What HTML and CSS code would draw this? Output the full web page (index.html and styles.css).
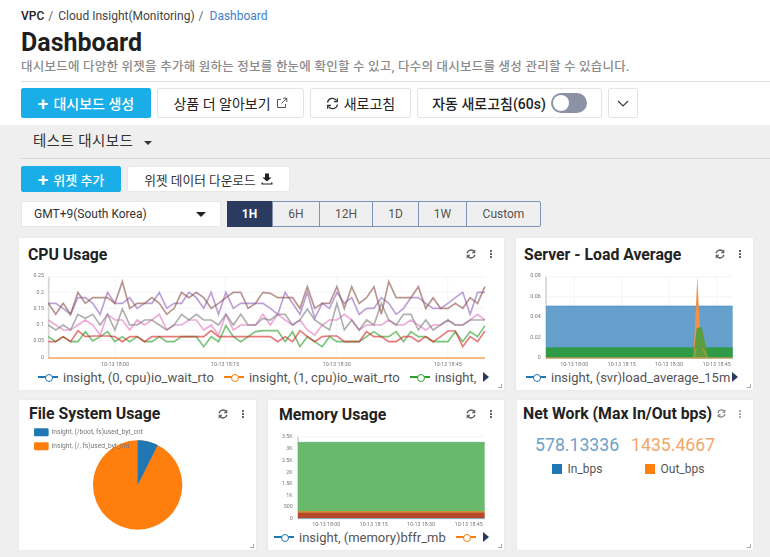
FILE: index.html
```html
<!DOCTYPE html>
<html lang="ko">
<head>
    <meta charset="UTF-8">
    <meta name="viewport" content="width=device-width, initial-scale=1.0">
    <title>Dashboard</title>
    <link rel="stylesheet" href="styles.css">
</head>
<body>

    <div class="top">
        <div class="crumbs">
            <b>VPC</b><span class="sep">/</span><span>Cloud Insight(Monitoring)</span><span class="sep">/</span><span class="crumb-now">Dashboard</span>
        </div>
        <h1>Dashboard</h1>
        <p class="desc">대시보드에 다양한 위젯을 추가해 원하는 정보를 한눈에 확인할 수 있고, 다수의 대시보드를 생성 관리할 수 있습니다.</p>
        <div class="toolbar">
            <button class="btn btn-blue btn-create"><span class="plus">+</span> 대시보드 생성</button>
            <button class="btn btn-more">상품 더 알아보기
                <svg class="ico" width="12" height="12" viewBox="0 0 12 12"><path d="M9.5 7v3.5h-8v-8H5M7 1.2h3.8V5M10.6 1.4 5.5 6.5" fill="none" stroke="#555" stroke-width="1"/></svg>
            </button>
            <button class="btn btn-refresh">
                <svg class="ico" width="13" height="13" viewBox="0 0 13 13"><path d="M1.5 5.5A5 5 0 0 1 10.6 3.6M11.5 7.5A5 5 0 0 1 2.4 9.4" fill="none" stroke="#333" stroke-width="1.3"/><path d="M11.4 1.2v3.4H8M1.6 11.8V8.4H5" fill="none" stroke="#333" stroke-width="1.1"/></svg>
                새로고침
            </button>
            <button class="btn btn-auto">자동 새로고침(60s)<span class="toggle"><span class="knob"></span></span></button>
            <button class="btn btn-down">
                <svg width="12" height="7" viewBox="0 0 12 7"><path d="M1 1l5 5 5-5" fill="none" stroke="#333" stroke-width="1.1"/></svg>
            </button>
        </div>
    </div>

    <div class="main">
        <div class="tabs">
            <span class="tab-name">테스트 대시보드</span><span class="caret"></span>
        </div>
        <div class="actions">
            <button class="btn btn-blue btn-widget"><span class="plus">+</span> 위젯 추가</button>
            <button class="btn btn-white btn-data">위젯 데이터 다운로드
                <svg class="ico" width="12" height="12" viewBox="0 0 12 12"><path d="M4 .5h4v4h2.6L6 8.6 1.4 4.5H4zM.5 9.6h1.4v1h8.2v-1h1.4v2H.5z" fill="#222"/></svg>
            </button>
        </div>
        <div class="filters">
            <div class="zone"><span>GMT+9(South Korea)</span><span class="caret caret-big"></span></div>
            <div class="seg">
                <span class="seg-item seg-on w46">1H</span>
                <span class="seg-item w47">6H</span>
                <span class="seg-item w53">12H</span>
                <span class="seg-item w46">1D</span>
                <span class="seg-item w48">1W</span>
                <span class="seg-item w73">Custom</span>
            </div>
        </div>

        <div class="row row-one">
            <div class="card card-wide">
                <div class="card-head">
                    <h3>CPU Usage</h3>
                    <svg class="mini" width="10" height="10" viewBox="0 0 13 13"><path d="M1.5 5.5A5 5 0 0 1 10.6 3.6M11.5 7.5A5 5 0 0 1 2.4 9.4" fill="none" stroke="#555" stroke-width="1.8"/><path d="M11.4 1v3.8H7.8M1.6 12V8.2h3.6" fill="none" stroke="#555" stroke-width="1.4"/></svg>
                    <span class="dots"><i></i><i></i><i></i></span>
                </div>
                <svg class="chart" width="485" height="96" viewBox="12 105 1455 288">
                    <g class="grid">
                        <path d="M100 125H1410M100 172H1410M100 220H1410M100 268H1410M100 317H1410M300 125V370M630 125V370M965 125V370M1298 125V370"/>
                    </g>
                    <path class="axis" d="M101 125V370"/>
                    <g class="tick-y">
                        <text x="87" y="127">0.25</text>
                        <text x="87" y="177">0.2</text>
                        <text x="87" y="225">0.15</text>
                        <text x="87" y="273">0.1</text>
                        <text x="87" y="322">0.05</text>
                        <text x="87" y="372">0</text>
                    </g>
                    <g class="tick-x">
                        <text x="300" y="393">10-13 18:00</text>
                        <text x="630" y="393">10-13 18:15</text>
                        <text x="965" y="393">10-13 18:30</text>
                        <text x="1298" y="393">10-13 18:45</text>
                    </g>
                    <g id="cpuLines"></g>
                    <path d="M100 369H1410" stroke="#f5a35c" stroke-width="4"/>
                </svg>
                <div class="legend">
                    <div class="legend-list">
                        <span class="lg"><i class="mark mark-blue"></i>insight, (0, cpu)io_wait_rto</span>
                        <span class="lg"><i class="mark mark-orange"></i>insight, (1, cpu)io_wait_rto</span>
                        <span class="lg"><i class="mark mark-green"></i>insight,</span>
                    </div>
                    <span class="next"></span>
                </div>
                <span class="grip"></span>
            </div>

            <div class="card card-side">
                <div class="card-head">
                    <h3>Server - Load Average</h3>
                    <svg class="mini" width="10" height="10" viewBox="0 0 13 13"><path d="M1.5 5.5A5 5 0 0 1 10.6 3.6M11.5 7.5A5 5 0 0 1 2.4 9.4" fill="none" stroke="#555" stroke-width="1.8"/><path d="M11.4 1v3.8H7.8M1.6 12V8.2h3.6" fill="none" stroke="#555" stroke-width="1.4"/></svg>
                    <span class="dots"><i></i><i></i><i></i></span>
                </div>
                <svg class="chart" width="237" height="96" viewBox="18 105 711 288">
                    <g class="grid">
                        <path d="M108 125H668M108 185H668M193 125V370M335 125V370M477 125V370M620 125V370"/>
                    </g>
                    <path class="axis" d="M108 125V370"/>
                    <rect x="108" y="213" width="560" height="157" fill="#659fcb"/>
                    <path d="M108 213H668" stroke="#4f8fc0" stroke-width="2"/>
                    <rect x="108" y="337" width="560" height="33" fill="#2f9b47"/>
                    <path d="M550 370 556 250 562 125 568 250 575 370Z" fill="#f0934a"/>
                    <path d="M550 370 560 280 575 275 595 370Z" fill="#5d9c3c"/>
                    <path d="M553 370 558 340M578 340 592 370" stroke="#d9a23c" stroke-width="2" fill="none"/>
                    <path d="M108 369H668" stroke="#f5a35c" stroke-width="3"/>
                    <g class="tick-y">
                        <text x="92" y="127">0.08</text>
                        <text x="92" y="190">0.06</text>
                        <text x="92" y="250">0.04</text>
                        <text x="92" y="311">0.02</text>
                        <text x="92" y="372">0</text>
                    </g>
                    <g class="tick-x">
                        <text x="193" y="393">10-13 18:00</text>
                        <text x="335" y="393">10-13 18:15</text>
                        <text x="477" y="393">10-13 18:30</text>
                        <text x="620" y="393">10-13 18:45</text>
                    </g>
                </svg>
                <div class="legend legend-side">
                    <div class="legend-list">
                        <span class="lg"><i class="mark mark-blue"></i>insight, (svr)load_average_15m</span>
                    </div>
                    <span class="next"></span>
                </div>
                <span class="grip"></span>
            </div>
        </div>

        <div class="row">
            <div class="card card-side">
                <div class="card-head card-head-low">
                    <h3>File System Usage</h3>
                    <svg class="mini" width="10" height="10" viewBox="0 0 13 13"><path d="M1.5 5.5A5 5 0 0 1 10.6 3.6M11.5 7.5A5 5 0 0 1 2.4 9.4" fill="none" stroke="#555" stroke-width="1.8"/><path d="M11.4 1v3.8H7.8M1.6 12V8.2h3.6" fill="none" stroke="#555" stroke-width="1.4"/></svg>
                    <span class="dots"><i></i><i></i><i></i></span>
                </div>
                <svg class="pie" width="237" height="125" viewBox="12 90 711 375">
                    <circle cx="368" cy="270" r="134" fill="#ff7f0e"/>
                    <path d="M368 270V136A134 134 0 0 1 428 150Z" fill="#1f77b4"/>
                    <rect x="57" y="100" width="44" height="24" rx="4" fill="#1f77b4"/>
                    <rect x="57" y="142" width="44" height="24" rx="4" fill="#ff7f0e"/>
                    <text class="pie-label" x="110" y="118">insight, (/boot, fs)used_byt_cnt</text>
                    <text class="pie-label" x="110" y="159">insight, (/, fs)used_byt_cnt</text>
                </svg>
                <span class="grip"></span>
            </div>

            <div class="card card-mid">
                <div class="card-head card-head-mem">
                    <h3>Memory Usage</h3>
                    <svg class="mini" width="10" height="10" viewBox="0 0 13 13"><path d="M1.5 5.5A5 5 0 0 1 10.6 3.6M11.5 7.5A5 5 0 0 1 2.4 9.4" fill="none" stroke="#555" stroke-width="1.8"/><path d="M11.4 1v3.8H7.8M1.6 12V8.2h3.6" fill="none" stroke="#555" stroke-width="1.4"/></svg>
                    <span class="dots"><i></i><i></i><i></i></span>
                </div>
                <svg class="chart" width="236" height="95" viewBox="18 108 708 285">
                    <g class="grid">
                        <path d="M108 125H668"/>
                    </g>
                    <path class="axis" d="M108 125V372"/>
                    <rect x="108" y="142" width="560" height="208" fill="#69b96c"/>
                    <path d="M108 142H668" stroke="#57a85c" stroke-width="2"/>
                    <rect x="108" y="348" width="560" height="6" fill="#d0923a"/>
                    <rect x="108" y="353" width="560" height="17" fill="#b5472b"/>
                    <path d="M108 371H668" stroke="#4f8fc0" stroke-width="2"/>
                    <g class="tick-y">
                        <text x="92" y="129">3.5K</text>
                        <text x="92" y="165">3K</text>
                        <text x="92" y="200">2.5K</text>
                        <text x="92" y="236">2K</text>
                        <text x="92" y="270">1.5K</text>
                        <text x="92" y="305">1K</text>
                        <text x="92" y="340">500</text>
                        <text x="92" y="375">0</text>
                    </g>
                    <g class="tick-x">
                        <text x="193" y="393">10-13 18:00</text>
                        <text x="335" y="393">10-13 18:15</text>
                        <text x="477" y="393">10-13 18:30</text>
                        <text x="620" y="393">10-13 18:45</text>
                    </g>
                </svg>
                <div class="legend legend-mid">
                    <div class="legend-list">
                        <span class="lg"><i class="mark mark-blue"></i>insight, (memory)bffr_mb</span>
                        <span class="lg"><i class="mark mark-orange"></i></span>
                    </div>
                    <span class="next"></span>
                </div>
                <span class="grip"></span>
            </div>

            <div class="card card-mid card-net">
                <div class="card-head card-head-net">
                    <h3>Net Work (Max In/Out bps)</h3>
                    <svg class="mini" width="9" height="9" viewBox="0 0 13 13"><path d="M1.5 5.5A5 5 0 0 1 10.6 3.6M11.5 7.5A5 5 0 0 1 2.4 9.4" fill="none" stroke="#777" stroke-width="1.8"/><path d="M11.4 1v3.8H7.8M1.6 12V8.2h3.6" fill="none" stroke="#777" stroke-width="1.4"/></svg>
                    <span class="dots dots-light"><i></i><i></i><i></i></span>
                </div>
                <div class="net">
                    <div class="net-col">
                        <div class="net-val net-in">578.13336</div>
                        <div class="net-key"><i class="sq sq-in"></i>In_bps</div>
                    </div>
                    <div class="net-col">
                        <div class="net-val net-out">1435.4667</div>
                        <div class="net-key net-key-out"><i class="sq sq-out"></i>Out_bps</div>
                    </div>
                </div>
                <span class="grip"></span>
            </div>
        </div>
    </div>

    <script src="charts.js"></script>
</body>
</html>
```

FILE: styles.css
```css
* {
    box-sizing: border-box;
}
html, body {
    margin: 0;
    height: 557px;
    overflow: hidden;
}
body {
    font-family: Roboto, "Noto Sans CJK KR", sans-serif;
    background-color: #efefef;
    color: #222;
}
.top {
    background-color: #fff;
    height: 125px;
    padding: 9px 0 0 21px;
}
.crumbs {
    font-size: 12px;
    line-height: 15px;
    color: #444;
}
.crumbs b {
    color: #222;
    font-weight: 500;
}
.sep {
    margin: 0 5px 0 4px;
    color: #666;
}
.crumb-now {
    margin-left: 1px;
    color: #3f7fca;
}
h1 {
    margin: 4px 0 0;
    font-size: 25px;
    line-height: 30px;
    font-weight: 700;
    color: #1f1f1f;
}
.desc {
    margin: 1px 0 0;
    font-size: 12.5px;
    line-height: 15px;
    font-weight: 500;
    color: #8a8a8a;
    letter-spacing: .24px;
    white-space: nowrap;
}
.toolbar {
    margin-top: 7px;
    padding-top: 6px;
    border-top: 1px solid #ddd;
    display: flex;
    gap: 6px;
}
.btn {
    font-family: inherit;
    font-size: 14px;
    height: 30px;
    padding: 0;
    display: flex;
    align-items: center;
    justify-content: center;
    gap: 5px;
    border: 1px solid #e4e4e4;
    border-radius: 2px;
    background-color: #fff;
    color: #222;
    white-space: nowrap;
}
.btn-blue {
    background-color: #1aaee8;
    border-color: #1aaee8;
    color: #fff;
    font-weight: 500;
}
.plus {
    font-size: 19px;
    line-height: 19px;
    font-weight: 500;
}
.btn-create { width: 130px; }
.btn-more { width: 147px; }
.btn-refresh { width: 101px; }
.btn-auto { width: 185px; font-weight: 500; }
.btn-down { width: 30px; }
.toggle {
    width: 36px;
    height: 20px;
    border-radius: 10px;
    background-color: #8b92a5;
    padding: 2px;
    display: block;
}
.knob {
    display: block;
    width: 16px;
    height: 16px;
    border-radius: 50%;
    background-color: #fff;
}

.main {
    padding-left: 21px;
}
.tabs {
    height: 34px;
    border-bottom: 1px solid #d9d9d9;
    padding: 8px 0 0 12px;
    font-size: 14.5px;
    line-height: 18px;
    display: flex;
    align-items: flex-start;
    color: #333;
}
.tab-name {
    letter-spacing: .4px;
}
.caret {
    width: 0;
    height: 0;
    margin: 8px 0 0 11px;
    border-left: 4px solid transparent;
    border-right: 4px solid transparent;
    border-top: 4px solid #333;
}
.caret-big {
    margin: 0;
    border-left-width: 5px;
    border-right-width: 5px;
    border-top-width: 5px;
    border-top-color: #222;
}
.actions {
    display: flex;
    gap: 6px;
    margin-top: 7px;
}
.actions .btn {
    height: 26px;
    font-size: 13px;
}
.btn-widget { width: 100px; }
.actions .btn-data { width: 163px; border-color: #e8e8e8; color: #333; font-size: 12.7px; }
.filters {
    display: flex;
    gap: 6px;
    margin-top: 9px;
}
.zone {
    width: 200px;
    height: 26px;
    background-color: #fff;
    border: 1px solid #e8e8e8;
    padding: 0 14px 0 12px;
    display: flex;
    align-items: center;
    justify-content: space-between;
    font-size: 12px;
    color: #333;
}
.seg {
    display: flex;
    height: 26px;
    border: 1px solid #7d95b5;
    border-radius: 2px;
    font-size: 12px;
    color: #555;
}
.seg-item {
    display: flex;
    align-items: center;
    justify-content: center;
    border-right: 1px solid #7d95b5;
}
.seg-item:last-child {
    border-right: none;
}
.seg-on {
    background-color: #2b3a5f;
    color: #fff;
    font-weight: 700;
    margin: -1px 0 -1px -1px;
}
.w46 { width: 46px; }
.w47 { width: 47px; }
.w48 { width: 48px; }
.w53 { width: 53px; }
.w73 { width: 73px; }

.row {
    display: flex;
    gap: 12px;
    margin: 10px 0 0 -2px;
}
.row-one {
    margin-top: 11px;
}
.card {
    position: relative;
    background-color: #fff;
    height: 152px;
    box-shadow: 0 0 2px rgba(0, 0, 0, .06);
}
.row:not(.row-one) .card {
    height: 150px;
}
.card-wide { width: 485px; }
.card-side { width: 237px; }
.card-mid { width: 236px; }
.card-net { margin-left: 1px; }
.card-head {
    height: 32px;
    padding-left: 9px;
    display: flex;
    align-items: center;
}
.card-side .card-head { padding-left: 8px; }
.card-side .card-head-low { padding-left: 10px; height: 27px; }
.card-head-mem { padding-left: 11px; height: 31px; padding-bottom: 3px; }
.card-head-net { padding-left: 6px; height: 27px; }
h3 {
    margin: 0;
    font-size: 15.8px;
    font-weight: 700;
    color: #222;
    white-space: nowrap;
    flex: 1;
}
.mini {
    margin-right: 14px;
    flex: none;
}
.card-head-net .mini {
    margin-right: 13px;
}
.dots {
    display: flex;
    flex-direction: column;
    gap: 1px;
    margin-right: 12px;
    width: 2px;
    flex: none;
}
.dots i {
    display: block;
    width: 2px;
    height: 2px;
    background-color: #666;
}
.dots-light i {
    background-color: #aaa;
}
.chart {
    display: block;
    filter: blur(.45px);
}
.grid path {
    stroke: #eef0f8;
    stroke-width: 2;
    fill: none;
}
.axis {
    stroke: #d4d4d4;
    stroke-width: 5;
    fill: none;
}
.tick-y text {
    font-family: Roboto, sans-serif;
    font-size: 16px;
    fill: #777;
    text-anchor: end;
}
.tick-x text {
    font-family: Roboto, sans-serif;
    font-size: 16px;
    fill: #777;
    text-anchor: middle;
}
.cpu-line {
    fill: none;
    stroke-width: 5;
    stroke-linejoin: miter;
    opacity: .62;
}
.legend {
    height: 22px;
    padding-left: 19px;
    padding-right: 15px;
    display: flex;
    align-items: center;
    gap: 6px;
    font-size: 13px;
    color: #555;
}
.legend-side { padding-left: 10px; padding-right: 15px; gap: 1px; }
.legend-mid { padding-left: 6px; padding-right: 15px; }
.legend-list {
    display: flex;
    gap: 10px;
    flex: 1;
    overflow: hidden;
    white-space: nowrap;
}
.lg {
    display: flex;
    align-items: center;
    gap: 5px;
    flex: none;
}
.mark {
    position: relative;
    display: block;
    width: 20px;
    height: 2px;
}
.mark::after {
    content: "";
    position: absolute;
    left: 7px;
    top: -2px;
    width: 6px;
    height: 6px;
    border-radius: 50%;
    background-color: #fff;
    border: 1.5px solid currentColor;
}
.mark-blue { background-color: #1f77b4; color: #1f77b4; }
.mark-orange { background-color: #ff7f0e; color: #ff7f0e; }
.mark-green { background-color: #2ca02c; color: #2ca02c; }
.next {
    width: 0;
    height: 0;
    flex: none;
    border-top: 5px solid transparent;
    border-bottom: 5px solid transparent;
    border-left: 6px solid #2b3a5f;
}
.grip {
    position: absolute;
    right: 2px;
    bottom: 2px;
    width: 4px;
    height: 4px;
    border-right: 1px solid #aaa;
    border-bottom: 1px solid #aaa;
}
.pie {
    display: block;
    margin-top: -2px;
    filter: blur(.4px);
}
.pie-label {
    font-family: Roboto, sans-serif;
    font-size: 20px;
    fill: #777;
}
.net {
    display: flex;
    padding-left: 18px;
    gap: 12px;
    margin-top: 6px;
}
.net-col {
    width: 84px;
}
.net-val {
    font-size: 17.7px;
    line-height: 24px;
    white-space: nowrap;
}
.net-in { color: #6e9fc9; }
.net-out { color: #f4a66a; }
.net-key {
    display: flex;
    align-items: center;
    justify-content: center;
    gap: 6px;
    margin-top: 5px;
    font-size: 12px;
    color: #555;
}
.net-key-out {
    padding-left: 3px;
}
.sq {
    display: block;
    width: 10px;
    height: 10px;
}
.sq-in { background-color: #1f77b4; }
.sq-out { background-color: #ff7f0e; }
```

FILE: charts.js
```js
// CPU 차트 데이터 (y 좌표)
const cpuSeries = [
    { color: "#e377c2", y: [255,270,285,285,270,255,270,300,238,255,255,285,255,270,255,238,285,270,270,255,255,285,270,300,238,285,270,270,270,238,270,238,255,270,255,285,300,270,255,255,238,255,285,270,270,270,255,270,270,255,270,285,270,270,255,270,270,255,238,255] },
    { color: "#7f7f7f", y: [270,285,270,285,238,250,238,270,238,285,222,270,270,255,255,270,285,270,238,255,238,255,255,270,238,270,238,270,270,250,255,238,238,270,255,222,255,270,285,205,285,255,285,255,270,205,255,270,238,238,285,255,285,270,255,270,270,255,255,255] },
    { color: "#2ca02c", y: [305,320,305,320,320,290,318,305,290,320,305,320,305,320,320,305,320,320,305,305,305,335,305,320,272,305,320,305,290,287,287,287,320,290,335,305,320,335,305,320,320,320,320,305,290,305,305,290,320,290,305,305,320,320,320,290,320,290,305,272] },
    { color: "#d62728", y: [320,320,305,320,287,305,303,303,303,305,320,305,305,320,305,305,305,305,305,305,305,305,287,305,305,305,305,305,305,305,305,320,305,320,287,305,320,305,303,303,320,320,320,290,305,305,320,320,305,305,320,305,320,305,288,288,335,305,320,288] },
    { color: "#9467bd", y: [205,205,220,238,188,188,205,238,172,205,205,188,220,205,205,172,220,205,205,172,188,220,172,238,172,220,205,205,205,205,220,238,172,205,238,172,250,205,220,172,205,188,238,220,220,188,205,238,220,188,188,205,220,220,205,188,172,238,172,172] },
    { color: "#8c564b", y: [205,238,205,238,172,205,188,188,188,205,140,220,205,205,188,205,238,220,172,188,172,188,220,205,188,172,172,220,205,172,175,188,188,188,220,155,220,205,205,155,220,155,205,188,155,238,140,188,188,188,155,220,188,220,220,205,220,188,205,155] }
];

const cpuGroup = document.getElementById("cpuLines");
for (const series of cpuSeries) {
    const line = document.createElementNS("http://www.w3.org/2000/svg", "polyline");
    line.setAttribute("points", series.y.map((y, i) => (100 + 22.2 * i).toFixed(1) + "," + y).join(" "));
    line.setAttribute("stroke", series.color);
    line.setAttribute("class", "cpu-line");
    cpuGroup.appendChild(line);
}
```
